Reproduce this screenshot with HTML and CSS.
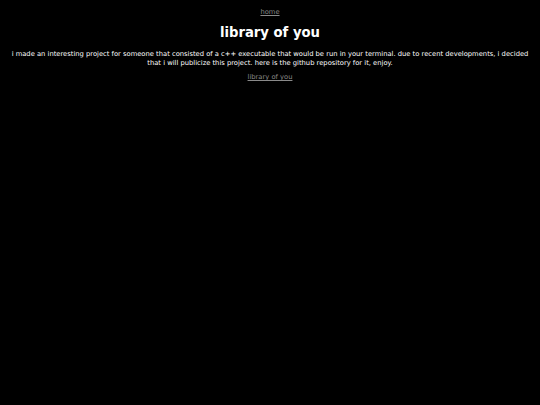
FILE: index.html
```html
<!DOCTYPE html>
<html>
<head>
<meta charset="utf-8">
<link rel="stylesheet" href="styles.css">
</head>
<body>
<nav class="nav"><a href="#" class="link">home</a></nav>
<h1 class="title">library of you</h1>
<p class="text">i made an interesting project for someone that consisted of a c++ executable that would be run in your terminal. due to recent developments, i decided that i will publicize this project. here is the github repository for it, enjoy.</p>
<p class="repo"><a href="#" class="link">library of you</a></p>
</body>
</html>
```
FILE: styles.css
```css
html, body {
  background: #000;
}
body {
  margin: 8px;
  color: #fff;
  font-family: "DejaVu Sans", Verdana, sans-serif;
  font-size: 6.75px;
  line-height: 9px;
  text-align: center;
}
.link {
  color: #8a8a8a;
}
.nav {
  margin: 0;
}
.title {
  font-size: 13.2px;
  line-height: 16px;
  font-weight: bold;
  margin: 8px 0 9px;
}
.text {
  margin: 0;
}
.repo {
  margin: 5px 0 0;
}
```
